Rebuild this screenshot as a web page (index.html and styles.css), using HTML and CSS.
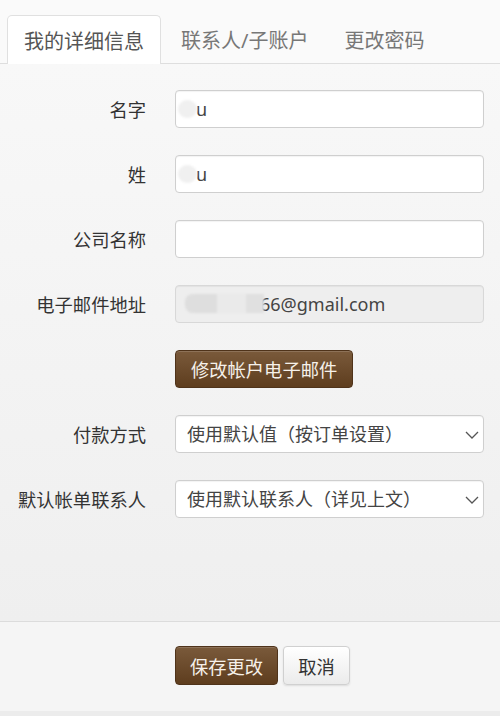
FILE: index.html
```html
<!DOCTYPE html>
<html lang="zh-CN">
<head>
<meta charset="utf-8">
<title>我的详细信息</title>
<link rel="stylesheet" href="styles.css">
</head>
<body>
<div class="page">
  <div class="tabs">
    <div class="tab active">我的详细信息</div>
    <div class="tab">联系人/子账户</div>
    <div class="tab">更改密码</div>
  </div>
  <div class="content">
    <form class="form">
      <label class="label">名字</label>
      <div class="field">
        <input class="input pad-blur" type="text" value="u">
        <span class="blur-dot"></span>
      </div>

      <label class="label">姓</label>
      <div class="field">
        <input class="input pad-blur" type="text" value="u">
        <span class="blur-dot"></span>
      </div>

      <label class="label">公司名称</label>
      <div class="field">
        <input class="input" type="text" value="">
      </div>

      <label class="label">电子邮件地址</label>
      <div class="field">
        <input class="input disabled pad-email" type="text" value="66@gmail.com" disabled>
        <span class="blur-email"><span class="b1"></span><span class="b2"></span><span class="b3"></span></span>
      </div>

      <span class="label"></span>
      <div class="field">
        <button type="button" class="btn btn-brown">修改帐户电子邮件</button>
      </div>

      <label class="label">付款方式</label>
      <div class="field select-wrap">
        <select class="input select"><option>使用默认值（按订单设置）</option></select>
        <svg class="chev" width="14" height="8" viewBox="0 0 14 8"><polyline points="1,1 7,7 13,1" fill="none" stroke="#555" stroke-width="1.3"/></svg>
      </div>

      <label class="label">默认帐单联系人</label>
      <div class="field select-wrap">
        <select class="input select"><option>使用默认联系人（详见上文）</option></select>
        <svg class="chev" width="14" height="8" viewBox="0 0 14 8"><polyline points="1,1 7,7 13,1" fill="none" stroke="#555" stroke-width="1.3"/></svg>
      </div>
    </form>
  </div>
  <div class="footer">
    <button type="button" class="btn btn-brown">保存更改</button>
    <button type="button" class="btn btn-light">取消</button>
  </div>
  <div class="bottom-strip"></div>
</div>
</body>
</html>
```
FILE: styles.css
```css
* { box-sizing: border-box; }
html, body { margin: 0; padding: 0; }
body {
  font-family: "Noto Sans", "Noto Sans CJK SC", sans-serif;
  background: #eeeeee;
  color: #333;
}
.page {
  width: 500px;
  height: 716px;
  display: flex;
  flex-direction: column;
}
.tabs {
  display: flex;
  gap: 4px;
  padding: 15px 0 0 7px;
  background: #fafafa;
  border-bottom: 1px solid #dedede;
  height: 64px;
}
.tab {
  height: 48px;
  padding: 0 16px;
  display: flex;
  align-items: center;
  font-size: 20px;
  color: #777;
  border: 1px solid transparent;
  border-bottom: none;
  border-radius: 5px 5px 0 0;
}
.tab + .tab { padding: 0 15px; }
.tab.active {
  background: #fff;
  border-color: #e0e0e0;
  color: #555;
  margin-bottom: -1px;
  height: 49px;
}
.content {
  flex: 0 0 558px;
  background: linear-gradient(#f8f8f8, #efefef);
  border-bottom: 1px solid #dcdcdc;
  padding: 26px 16px 0 0;
}
.form {
  display: grid;
  grid-template-columns: 146px 1fr;
  column-gap: 29px;
  row-gap: 27px;
  align-items: center;
}
.label {
  text-align: right;
  font-size: 18.3px;
  color: #333;
  white-space: nowrap;
}
.field {
  position: relative;
  height: 38px;
}
.input {
  width: 100%;
  height: 38px;
  border: 1px solid #cfcfcf;
  border-radius: 4px;
  background: #fff;
  font-family: "Noto Sans", "Noto Sans CJK SC", sans-serif;
  font-size: 18px;
  color: #444;
  padding: 0 11px;
  box-shadow: inset 0 1px 1px rgba(0,0,0,0.05);
  outline: none;
}
.pad-blur { padding-left: 20px; }
.disabled {
  background: #eeeeee;
  color: #444;
  border-color: #d8d8d8;
  -webkit-text-fill-color: #444;
  opacity: 1;
}
.pad-email { padding-left: 84px; }
.blur-dot {
  position: absolute;
  left: 3px;
  top: 10px;
  width: 19px;
  height: 18px;
  border-radius: 50%;
  background: #f0f0f0;
  filter: blur(1px);
}
.blur-email {
  position: absolute;
  left: 10px;
  top: 9px;
  height: 19px;
  display: flex;
  filter: blur(0.8px);
}
.blur-email .b1 { width: 32px; background: #dedede; border-radius: 8px 0 0 8px; }
.blur-email .b2 { width: 29px; background: #eaeaea; }
.blur-email .b3 { width: 18px; background: #e0e0e0; }
.select {
  appearance: none;
  -webkit-appearance: none;
  cursor: pointer;
}
.chev {
  position: absolute;
  right: 5px;
  top: 16px;
}
.btn {
  height: 38px;
  border-radius: 4px;
  font-family: "Noto Sans", "Noto Sans CJK SC", sans-serif;
  font-size: 18.3px;
  padding: 0 14px;
  cursor: pointer;
}
.btn-brown {
  background: linear-gradient(#7a5a3b, #5e3d1e);
  border: 1px solid #4f331a;
  color: #f6f1ea;
  box-shadow: inset 0 1px 0 rgba(255,255,255,0.15);
}
.form .btn-brown { padding: 0 15px; }
.btn-light {
  background: linear-gradient(#ffffff, #ebebeb);
  border: 1px solid #d0d0d0;
  color: #333;
  box-shadow: 0 1px 2px rgba(0,0,0,0.1);
}
.footer {
  flex: 0 0 89px;
  background: #f5f5f5;
  display: flex;
  gap: 5px;
  padding: 24px 0 0 175px;
  align-items: flex-start;
}
.footer .btn { height: 39px; }
.bottom-strip {
  flex: 1;
  background: #ececec;
}
```
